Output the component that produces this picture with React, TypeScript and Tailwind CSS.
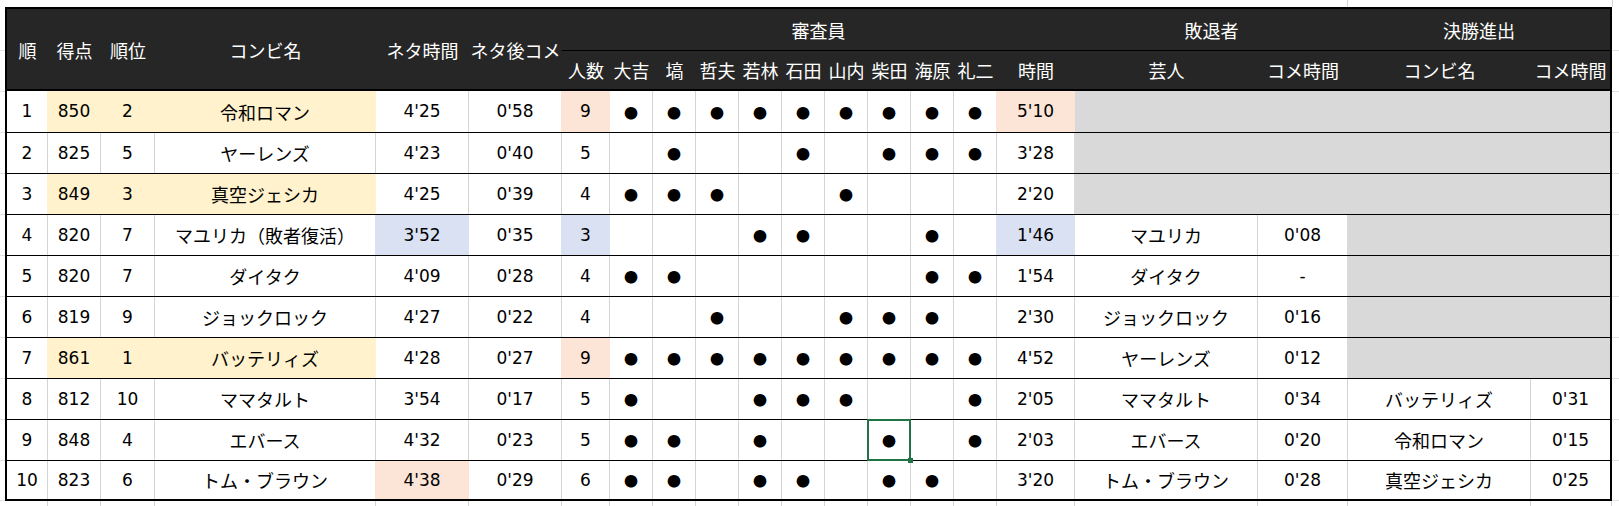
import React from "react";

type Fill = "n" | "y" | "o" | "b" | "g";

const BG: Record<Fill, string> = {
  n: "",
  y: "bg-[#fff2cc]",
  o: "bg-[#fce4d6]",
  b: "bg-[#d9e1f2]",
  g: "bg-[#d9d9d9]",
};

const BR: Record<Fill, string> = {
  n: "border-r border-r-[#d4d4d4]",
  y: "border-r border-r-[#fff2cc]",
  o: "border-r border-r-[#fce4d6]",
  b: "border-r border-r-[#d9e1f2]",
  g: "border-r border-r-[#d9d9d9]",
};

const GRID =
  "grid grid-cols-[41px_53px_54px_221px_93px_93px_48px_43px_43px_43px_43px_43px_43px_43px_43px_43px_78px_183px_90px_183px_79px]";

const WIDTHS = [
  "w-[41px]", "w-[53px]", "w-[54px]", "w-[221px]", "w-[93px]", "w-[93px]", "w-[48px]",
  "w-[43px]", "w-[43px]", "w-[43px]", "w-[43px]", "w-[43px]", "w-[43px]", "w-[43px]", "w-[43px]", "w-[43px]",
  "w-[78px]", "w-[183px]", "w-[90px]", "w-[183px]", "w-[81px]",
];

const SIDE_HEIGHTS = [
  "h-[44px]", "h-[41px]", "h-[41px]", "h-[41px]", "h-[41px]", "h-[41px]", "h-[41px]",
  "h-[41px]", "h-[41px]", "h-[41px]", "h-[41px]", "h-[40px]",
];

const ROW_HEIGHTS = [
  "h-[42px] border-b border-black",
  "h-[41px] border-b border-black",
  "h-[41px] border-b border-black",
  "h-[41px] border-b border-black",
  "h-[41px] border-b border-black",
  "h-[41px] border-b border-black",
  "h-[41px] border-b border-black",
  "h-[41px] border-b border-black",
  "h-[41px] border-b border-black",
  "h-[38px]",
];

type Row = {
  base: string[];
  dots: string;
  time: string;
  loser: string;
  loserTime: string;
  final: string;
  finalTime: string;
  fills: Partial<Record<number, Fill>>;
};

const rows: Row[] = [
  { base: ["1", "850", "2", "令和ロマン", "4'25", "0'58", "9"], dots: "111111111", time: "5'10", loser: "", loserTime: "", final: "", finalTime: "",
    fills: { 1: "y", 2: "y", 3: "y", 6: "o", 16: "o", 17: "g", 18: "g", 19: "g", 20: "g" } },
  { base: ["2", "825", "5", "ヤーレンズ", "4'23", "0'40", "5"], dots: "010010111", time: "3'28", loser: "", loserTime: "", final: "", finalTime: "",
    fills: { 17: "g", 18: "g", 19: "g", 20: "g" } },
  { base: ["3", "849", "3", "真空ジェシカ", "4'25", "0'39", "4"], dots: "111001000", time: "2'20", loser: "", loserTime: "", final: "", finalTime: "",
    fills: { 1: "y", 2: "y", 3: "y", 17: "g", 18: "g", 19: "g", 20: "g" } },
  { base: ["4", "820", "7", "マユリカ（敗者復活）", "3'52", "0'35", "3"], dots: "000110010", time: "1'46", loser: "マユリカ", loserTime: "0'08", final: "", finalTime: "",
    fills: { 4: "b", 6: "b", 16: "b", 19: "g", 20: "g" } },
  { base: ["5", "820", "7", "ダイタク", "4'09", "0'28", "4"], dots: "110000011", time: "1'54", loser: "ダイタク", loserTime: "-", final: "", finalTime: "",
    fills: { 19: "g", 20: "g" } },
  { base: ["6", "819", "9", "ジョックロック", "4'27", "0'22", "4"], dots: "001001110", time: "2'30", loser: "ジョックロック", loserTime: "0'16", final: "", finalTime: "",
    fills: { 19: "g", 20: "g" } },
  { base: ["7", "861", "1", "バッテリィズ", "4'28", "0'27", "9"], dots: "111111111", time: "4'52", loser: "ヤーレンズ", loserTime: "0'12", final: "", finalTime: "",
    fills: { 1: "y", 2: "y", 3: "y", 6: "o", 19: "g", 20: "g" } },
  { base: ["8", "812", "10", "ママタルト", "3'54", "0'17", "5"], dots: "100111001", time: "2'05", loser: "ママタルト", loserTime: "0'34", final: "バッテリィズ", finalTime: "0'31",
    fills: {} },
  { base: ["9", "848", "4", "エバース", "4'32", "0'23", "5"], dots: "110100101", time: "2'03", loser: "エバース", loserTime: "0'20", final: "令和ロマン", finalTime: "0'15",
    fills: {} },
  { base: ["10", "823", "6", "トム・ブラウン", "4'38", "0'29", "6"], dots: "110110110", time: "3'20", loser: "トム・ブラウン", loserTime: "0'28", final: "真空ジェシカ", finalTime: "0'25",
    fills: { 4: "o" } },
];

const judges = ["大吉", "塙", "哲夫", "若林", "石田", "山内", "柴田", "海原", "礼二"];

function Dot() {
  return <span className="font-['Noto_Sans_CJK_JP',sans-serif] text-[14px] leading-none">●</span>;
}

function Text({ s }: { s: string }) {
  if (s === "") return null;
  if (/^[0-9'\-]+$/.test(s)) {
    return <span className="font-['DejaVu_Sans',sans-serif] text-[17px] leading-none">{s}</span>;
  }
  return <span>{s}</span>;
}

function BodyRow({ row, index }: { row: Row; index: number }) {
  const cells: React.ReactNode[] = [
    ...row.base.map((s) => <Text s={s} />),
    ...row.dots.split("").map((d) => (d === "1" ? <Dot /> : null)),
    <Text s={row.time} />,
    <Text s={row.loser} />,
    <Text s={row.loserTime} />,
    <Text s={row.final} />,
    <Text s={row.finalTime} />,
  ];
  const fillOf = (c: number): Fill => row.fills[c] ?? "n";
  return (
    <div className={`${GRID} ${ROW_HEIGHTS[index]}`}>
      {cells.map((content, c) => {
        const f = fillOf(c);
        let border = "";
        if (c < 20) {
          const nf = fillOf(c + 1);
          border = f !== "n" ? BR[f] : nf !== "n" ? BR[nf] : BR.n;
        }
        const selected = index === 8 && c === 13;
        return (
          <div
            key={c}
            className={`flex items-center justify-center whitespace-nowrap ${BG[f]} ${border} ${selected ? "relative" : ""}`}
          >
            {content}
            {selected && (
              <>
                <div className="absolute left-[-1px] top-[-1px] w-[44px] h-[42px] border-2 border-[#217346] z-10" />
                <div className="absolute left-[40px] top-[38px] w-[5px] h-[5px] bg-[#217346] z-20" />
              </>
            )}
          </div>
        );
      })}
    </div>
  );
}

function Header() {
  const spanCell = "row-span-2 flex items-center justify-center pt-[2px] whitespace-nowrap";
  const sub = "flex items-center justify-center whitespace-nowrap";
  return (
    <div className={`${GRID} grid-rows-[42px_38px] bg-[#262626] text-white border-b-2 border-black`}>
      <div className={spanCell}>順</div>
      <div className={spanCell}>得点</div>
      <div className={spanCell}>順位</div>
      <div className={spanCell}>コンビ名</div>
      <div className={spanCell}>ネタ時間</div>
      <div className={spanCell}>ネタ後コメ</div>
      <div className="col-span-11 flex items-center justify-center border-b border-black">審査員</div>
      <div className="col-span-2 flex items-center justify-center border-b border-black">敗退者</div>
      <div className="col-span-2 flex items-center justify-center border-b border-black">決勝進出</div>
      <div className={sub}>人数</div>
      {judges.map((j) => (
        <div key={j} className={sub}>{j}</div>
      ))}
      <div className={sub}>時間</div>
      <div className={sub}>芸人</div>
      <div className={sub}>コメ時間</div>
      <div className={sub}>コンビ名</div>
      <div className={sub}>コメ時間</div>
    </div>
  );
}

function SideStrip({ grow }: { grow?: boolean }) {
  return (
    <div className={`flex flex-col ${grow ? "flex-1" : "w-[5px]"}`}>
      {SIDE_HEIGHTS.map((h, i) => (
        <div key={i} className={`${h} border-b border-[#e1e1e1]`} />
      ))}
    </div>
  );
}

export default function App() {
  return (
    <div className="w-[1619px] h-[506px] bg-white flex flex-col overflow-hidden font-['Noto_Sans_CJK_JP',sans-serif] text-[18px] leading-none text-black">
      <div className="h-[7px] flex shrink-0">
        <div className="w-[1348px] border-r border-[#d4d4d4]" />
        <div className="w-[265px] border-r border-[#d4d4d4]" />
      </div>
      <div className="flex shrink-0">
        <SideStrip />
        <div className="w-[1607px] border-2 border-black flex flex-col">
          <Header />
          {rows.map((r, i) => (
            <BodyRow key={i} row={r} index={i} />
          ))}
        </div>
        <SideStrip grow />
      </div>
      <div className="flex-1 flex">
        <div className="w-[7px]" />
        {WIDTHS.map((w, i) => (
          <div key={i} className={`${w} border-r border-[#d4d4d4]`} />
        ))}
      </div>
    </div>
  );
}
